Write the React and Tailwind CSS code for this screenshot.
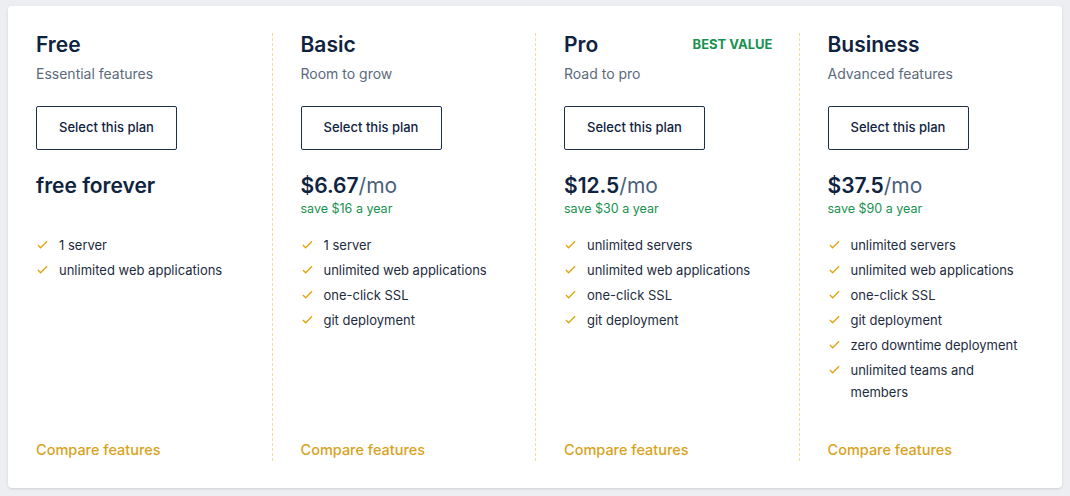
const plans = [
  { name: 'Free', sub: 'Essential features', price: 'free forever', features: ['1 server', 'unlimited web applications'] },
  { name: 'Basic', sub: 'Room to grow', price: '$6.67', save: 'save $16 a year', features: ['1 server', 'unlimited web applications', 'one-click SSL', 'git deployment'] },
  { name: 'Pro', sub: 'Road to pro', price: '$12.5', save: 'save $30 a year', best: true, features: ['unlimited servers', 'unlimited web applications', 'one-click SSL', 'git deployment'] },
  { name: 'Business', sub: 'Advanced features', price: '$37.5', save: 'save $90 a year', features: ['unlimited servers', 'unlimited web applications', 'one-click SSL', 'git deployment', 'zero downtime deployment', 'unlimited teams and members'] },
];

const Check = () => (
  <svg viewBox="0 0 12 12" className="w-[11px] h-[11px] shrink-0 mt-[5px]" fill="none" stroke="#e0a612" strokeWidth="1.5">
    <path d="M1 6.5l3 3 7-7" />
  </svg>
);

export default function App() {
  return (
    <div className="w-[1070px] h-[496px] bg-[#eceef1] pt-[6px] pl-[8px]" style={{ fontFamily: 'Inter, "Open Sans", sans-serif' }}>
      <div className="w-[1054px] h-[482px] bg-white rounded-sm shadow-sm flex py-[27px]">
        {plans.map((p, i) => (
          <div key={p.name} className={`w-[264px] px-7 flex flex-col ${i > 0 ? 'border-l border-dashed border-[#f3dca0]' : ''}`}>
            <div className="flex items-center justify-between h-[26px] -mt-[1px]">
              <h2 className="text-[21px] font-semibold text-[#0f2340]">{p.name}</h2>
              {p.best && <span className="text-[13px] font-bold text-[#16924f] mr-[-2px]">BEST VALUE</span>}
            </div>
            <p className="text-[14px] text-[#5b6a7c] mt-[5px]">{p.sub}</p>
            <button className="mt-[22px] w-[141px] h-[44px] border border-[#1e3048] rounded-[2px] text-[13px] font-medium text-[#0f2340]">Select this plan</button>
            <div className="mt-[20px] h-[26px] text-[21px] font-semibold text-[#0f2340]">
              {p.price}{p.save && <span className="font-normal text-[#4a5f7c]">/mo</span>}
            </div>
            <div className="h-[22px] mt-[4px] text-[12.5px] text-[#16924f]">{p.save}</div>
            <ul className="mt-[12px] flex flex-col">
              {p.features.map((f) => (
                <li key={f} className="flex gap-[11px] text-[13px] leading-[22px] text-[#1d2b3e] mb-[3px] pl-[1px]">
                  <Check />
                  <span>{f}</span>
                </li>
              ))}
            </ul>
            <a className="mt-auto text-[14.5px] font-medium text-[#d9a21b]">Compare features</a>
          </div>
        ))}
      </div>
    </div>
  );
}
